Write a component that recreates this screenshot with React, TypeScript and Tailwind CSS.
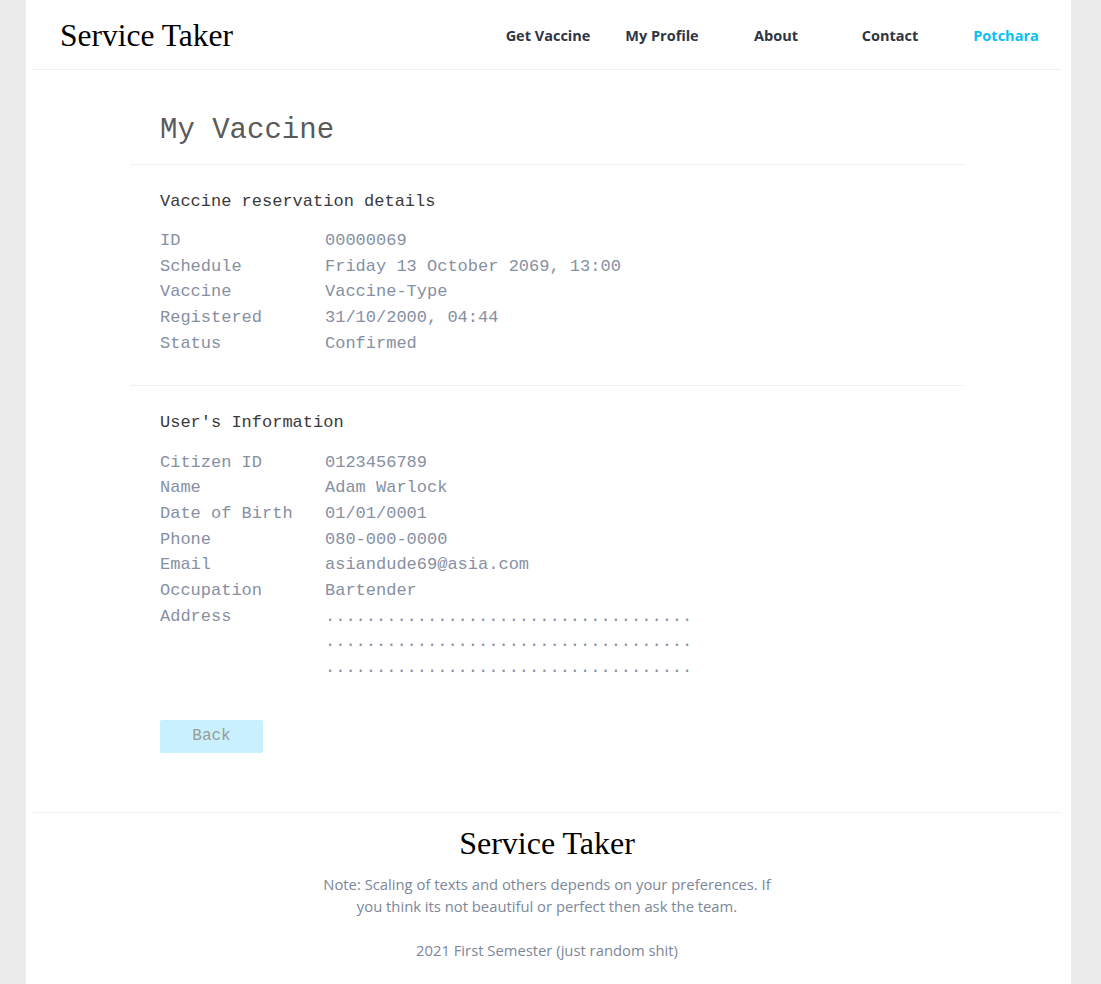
import React from 'react';

const mono = "font-['Liberation_Mono','Courier_New',monospace]";
const serif = "font-['Liberation_Serif','Times_New_Roman',serif]";
const sans = "font-['Open_Sans','Noto_Sans',sans-serif]";

const reservation: [string, string][] = [
  ['ID', '00000069'],
  ['Schedule', 'Friday 13 October 2069, 13:00'],
  ['Vaccine', 'Vaccine-Type'],
  ['Registered', '31/10/2000, 04:44'],
  ['Status', 'Confirmed'],
];

const dots = '....................................';

const userInfo: [string, string[]][] = [
  ['Citizen ID', ['0123456789']],
  ['Name', ['Adam Warlock']],
  ['Date of Birth', ['01/01/0001']],
  ['Phone', ['080-000-0000']],
  ['Email', ['asiandude69@asia.com']],
  ['Occupation', ['Bartender']],
  ['Address', [dots, dots, dots]],
];

const navItems = ['Get Vaccine', 'My Profile', 'About', 'Contact'];

const Row = ({ label, values }: { label: string; values: string[] }) => (
  <div className="flex">
    <div className="w-[165px] shrink-0">{label}</div>
    <div className="flex flex-col">
      {values.map((v, i) => (
        <span key={i}>{v}</span>
      ))}
    </div>
  </div>
);

const App = () => {
  return (
    <div className="min-h-screen bg-[#ececec]">
      <div className="ml-[26px] w-[1045px] bg-white">
        {/* header */}
        <div className="ml-[7px] mr-[10px] flex h-[70px] items-center justify-between border-b border-[#eef0f2] pt-[3px]">
          <div className={`${serif} pl-[27px] text-[31.5px] leading-none text-black`}>Service Taker</div>
          <nav className={`${sans} flex items-center text-[14.5px] font-bold text-[#2f3542]`}>
            {navItems.map((n) => (
              <a key={n} href="#" className="w-[114px] text-center">
                {n}
              </a>
            ))}
            <a href="#" className="w-[114px] pl-[4px] text-center text-[#0cc0f2]">
              Potchara
            </a>
          </nav>
        </div>

        {/* content */}
        <div className={`${mono} ml-[104px] w-[834px]`}>
          <div className="border-b border-[#eef0f4] pb-[16px] pl-[30px] pt-[43px]">
            <h1 className="text-[29px] leading-[35px] text-[#5a5a5a]">My Vaccine</h1>
          </div>

          <div className="border-b border-[#eef0f4] pb-[28px] pl-[30px] pt-[27px]">
            <h2 className="text-[17px] leading-[20px] text-[#3a3a3a]">Vaccine reservation details</h2>
            <div className="mt-[16px] text-[17px] leading-[25.7px] text-[#8690a2]">
              {reservation.map(([l, v]) => (
                <Row key={l} label={l} values={[v]} />
              ))}
            </div>
          </div>

          <div className="pl-[30px] pt-[27px]">
            <h2 className="text-[17px] leading-[20px] text-[#3a3a3a]">User's Information</h2>
            <div className="mt-[17px] text-[17px] leading-[25.7px] text-[#8690a2]">
              {userInfo.map(([l, v]) => (
                <Row key={l} label={l} values={v} />
              ))}
            </div>
            <button className="mt-[39px] h-[33px] w-[103px] rounded-[2px] bg-[#c8f0fd] text-[16px] text-[#9a9a9a]">
              Back
            </button>
          </div>
        </div>

        {/* footer */}
        <div className="ml-[7px] mr-[10px] mt-[59px] border-t border-[#eef0f2] pb-[24px] pt-[12px] text-center">
          <div className={`${serif} text-[32px] leading-[36px] text-black`}>Service Taker</div>
          <p className={`${sans} mx-auto mt-[12px] w-[460px] text-[14.8px] leading-[22px] text-[#7c8799]`}>
            Note: Scaling of texts and others depends on your preferences. If you think its not beautiful or perfect then ask the team.
          </p>
          <p className={`${sans} mt-[22px] text-[14.8px] leading-[22px] text-[#7c8799]`}>
            2021 First Semester (just random shit)
          </p>
        </div>
      </div>
    </div>
  );
};

export default App;
